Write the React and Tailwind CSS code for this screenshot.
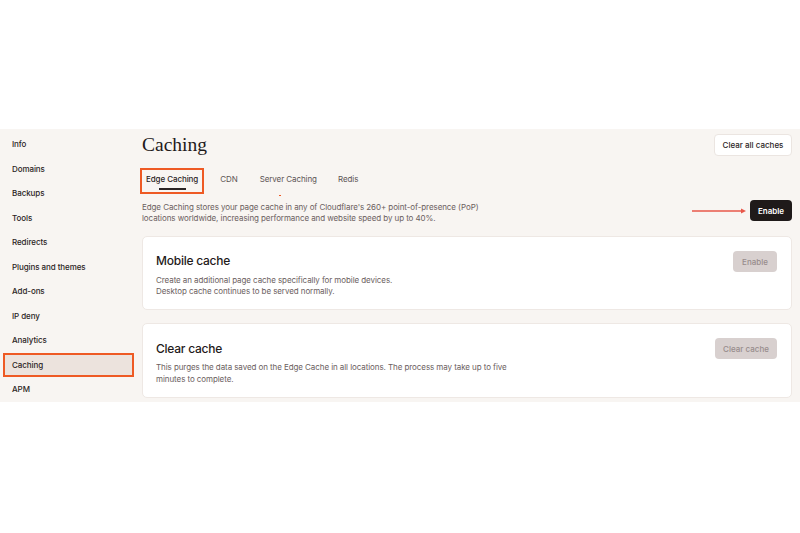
const navItems = [
  "Info",
  "Domains",
  "Backups",
  "Tools",
  "Redirects",
  "Plugins and themes",
  "Add-ons",
  "IP deny",
  "Analytics",
  "Caching",
  "APM",
];

const font = { fontFamily: "Inter, 'Noto Sans', sans-serif" };

const App = () => {
  return (
    <div className="h-[533px] w-[800px] bg-white pt-[129px]" style={font}>
      <div className="flex h-[273px] overflow-hidden bg-[#f8f5f2]">
        {/* sidebar */}
        <div className="flex w-[142px] shrink-0 flex-col pt-[3px]">
          {navItems.map((item) => (
            <div
              key={item}
              className={
                item === "Caching"
                  ? "ml-[3px] mr-[8px] flex h-[24.5px] items-center border-2 border-[#ee5a24] bg-[#ece3dd] pl-[7px] text-[8px] font-medium tracking-[-0.01em] text-[#2b2424]"
                  : "flex h-[24.5px] items-center pl-[12px] text-[8px] font-medium tracking-[-0.01em] text-[#2b2424]"
              }
            >
              {item}
            </div>
          ))}
        </div>

        {/* main */}
        <div className="flex-1 pr-[8px]">
          <div className="flex items-start justify-between pt-[1px]">
            <h1
              className="text-[19.5px] leading-[30px] text-[#1f1a1a]"
              style={{ fontFamily: "'Liberation Serif', serif" }}
            >
              Caching
            </h1>
            <button className="mt-[4px] h-[22px] w-[78px] rounded-[4px] border border-[#ebe5e1] bg-white text-[8px] font-medium text-[#2b2424]">
              Clear all caches
            </button>
          </div>

          <div className="mt-[8px] flex h-[26px] items-start text-[8px] leading-[10px] tracking-[-0.01em]">
            <div className="-ml-[2px] flex h-[26px] flex-col items-center border-2 border-[#ee5a24] px-[4px] pt-[4px]">
              <span className="font-medium text-[#2b2424]">Edge Caching</span>
              <div className="mt-[4px] h-[1.5px] w-[27px] bg-[#2b2424]" />
            </div>
            <div className="ml-[16px] pt-[6px] text-[#5c5454]">CDN</div>
            <div className="relative ml-[22px] pt-[6px] text-[#5c5454]">
              Server Caching
              <div className="absolute left-[19px] top-[27px] h-[1px] w-[2px] bg-[#ee5a24]" />
            </div>
            <div className="ml-[21px] pt-[6px] text-[#5c5454]">Redis</div>
          </div>

          <div className="mt-[6px] flex items-start justify-between">
            <p className="pt-[2px] text-[8px] leading-[11px] tracking-[-0.01em] text-[#6b6060]">
              Edge Caching stores your page cache in any of Cloudflare's 260+
              point-of-presence (PoP)
              <br />
              locations worldwide, increasing performance and website speed by
              up to 40%.
            </p>
            <div className="flex items-center">
              <svg width="56" height="8" viewBox="0 0 56 8" className="mr-[2px]">
                <line x1="0" y1="4" x2="51" y2="4" stroke="#e8574a" strokeWidth="1.4" />
                <path d="M49 1.5 L54 4 L49 6.5 Z" fill="#e8574a" />
              </svg>
              <button className="h-[21px] w-[42px] rounded-[4px] bg-[#1f1a1a] text-[8px] font-semibold text-white">
                Enable
              </button>
            </div>
          </div>

          <div className="mt-[12px] flex flex-col gap-[13px]">
            <div className="flex h-[74px] items-start justify-between rounded-[5px] border border-[#eee8e4] bg-white pl-[13px] pr-[14px] pt-[14px]">
              <div>
                <div className="mt-[2px] text-[12px] font-medium leading-[16px] tracking-[-0.02em] text-[#1f1a1a]">
                  Mobile cache
                </div>
                <p className="mt-[6px] text-[8px] leading-[11px] tracking-[-0.01em] text-[#6b6060]">
                  Create an additional page cache specifically for mobile devices.
                  <br />
                  Desktop cache continues to be served normally.
                </p>
              </div>
              <button className="h-[21px] w-[44px] rounded-[4px] bg-[#d8d0cf] text-[8px] font-medium text-[#978c8c]">
                Enable
              </button>
            </div>

            <div className="flex h-[75px] items-start justify-between rounded-[5px] border border-[#eee8e4] bg-white pl-[13px] pr-[14px] pt-[14px]">
              <div>
                <div className="mt-[3px] text-[12px] font-medium leading-[16px] tracking-[-0.02em] text-[#1f1a1a]">
                  Clear cache
                </div>
                <p className="mt-[5px] text-[8px] leading-[11.5px] tracking-[-0.01em] text-[#6b6060]">
                  This purges the data saved on the Edge Cache in all locations.
                  The process may take up to five
                  <br />
                  minutes to complete.
                </p>
              </div>
              <button className="h-[21px] w-[62px] rounded-[4px] bg-[#d8d0cf] text-[8px] font-medium text-[#978c8c]">
                Clear cache
              </button>
            </div>
          </div>
        </div>
      </div>
    </div>
  );
};

export default App;
